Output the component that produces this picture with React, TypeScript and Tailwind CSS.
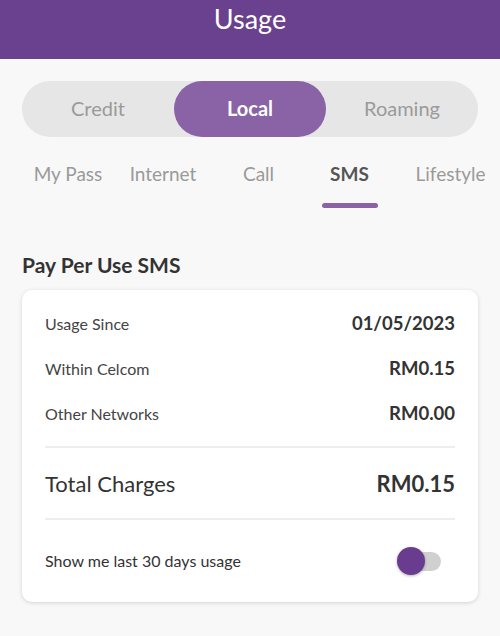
const tabs = [
  { label: 'My Pass', w: 'w-[96px]' },
  { label: 'Internet', w: 'w-[94px]' },
  { label: 'Call', w: 'w-[97px]' },
  { label: 'SMS', w: 'w-[85px]' },
  { label: 'Lifestyle', w: 'w-[117px]' },
]

const rows = [
  { label: 'Usage Since', value: '01/05/2023' },
  { label: 'Within Celcom', value: 'RM0.15' },
  { label: 'Other Networks', value: 'RM0.00' },
]

export default function App() {
  return (
    <div className="w-[500px] h-[636px] bg-[#f8f8f8] font-['Lato','Noto_Sans',sans-serif] overflow-hidden">
      {/* Header */}
      <div className="h-[59px] bg-[#6a418f] flex justify-center pt-[2px]">
        <h1 className="text-white text-[27px] leading-[34px]">Usage</h1>
      </div>

      {/* Segmented control */}
      <div className="mx-[22px] mt-[22px] h-[56px] rounded-full bg-[#e6e6e6] flex">
        <button className="flex-1 pb-[3px] text-[20px] text-[#9a9a9a]">Credit</button>
        <button className="w-[152px] pb-[3px] rounded-full bg-[#8963a6] text-white text-[20px] font-bold">
          Local
        </button>
        <button className="flex-1 pb-[3px] text-[20px] text-[#9a9a9a]">Roaming</button>
      </div>

      {/* Tabs */}
      <div className="flex pl-[20px] mt-[23px]">
        {tabs.map((t) => (
          <div key={t.label} className={`${t.w} flex flex-col items-center shrink-0`}>
            <span
              className={
                t.label === 'SMS'
                  ? 'text-[19px] leading-[28px] font-bold text-[#555] whitespace-nowrap'
                  : 'text-[19px] leading-[28px] text-[#9a9a9a] whitespace-nowrap'
              }
            >
              {t.label}
            </span>
            <span
              className={
                t.label === 'SMS'
                  ? 'mt-[15px] h-[5px] w-[56px] rounded-full bg-[#8963a6]'
                  : 'mt-[15px] h-[5px] w-[56px]'
              }
            />
          </div>
        ))}
      </div>

      {/* Section */}
      <h2 className="mx-[22px] mt-[43px] text-[21px] leading-[28px] font-bold text-[#333]">
        Pay Per Use SMS
      </h2>

      <div className="mx-[22px] mt-[11px] bg-white rounded-[10px] shadow-[0_1px_4px_rgba(0,0,0,0.15)] px-[23px] pt-[11px] pb-[26px]">
        {rows.map((r) => (
          <div key={r.label} className="flex justify-between items-center h-[45px]">
            <span className="text-[16px] text-[#444]">{r.label}</span>
            <span className="text-[18.5px] font-bold text-[#333]">{r.value}</span>
          </div>
        ))}
        <div className="mt-[10px] h-[2px] bg-[#eeeeee]" />
        <div className="flex justify-between items-center h-[70px]">
          <span className="text-[22px] text-[#333]">Total Charges</span>
          <span className="text-[22px] font-bold text-[#333]">RM0.15</span>
        </div>
        <div className="h-[2px] bg-[#eeeeee]" />
        <div className="flex justify-between items-center mt-[26px] h-[30px]">
          <span className="text-[16px] text-[#333]">Show me last 30 days usage</span>
          <div className="relative w-[44px] h-[30px] mr-[14px] flex items-center">
            <div className="ml-[4px] w-[40px] h-[19px] rounded-full bg-[#d0d0d0]" />
            <div className="absolute left-0 top-[1px] w-[28px] h-[28px] rounded-full bg-[#6a3c90] shadow-[0_1px_3px_rgba(0,0,0,0.3)]" />
          </div>
        </div>
      </div>
    </div>
  )
}
